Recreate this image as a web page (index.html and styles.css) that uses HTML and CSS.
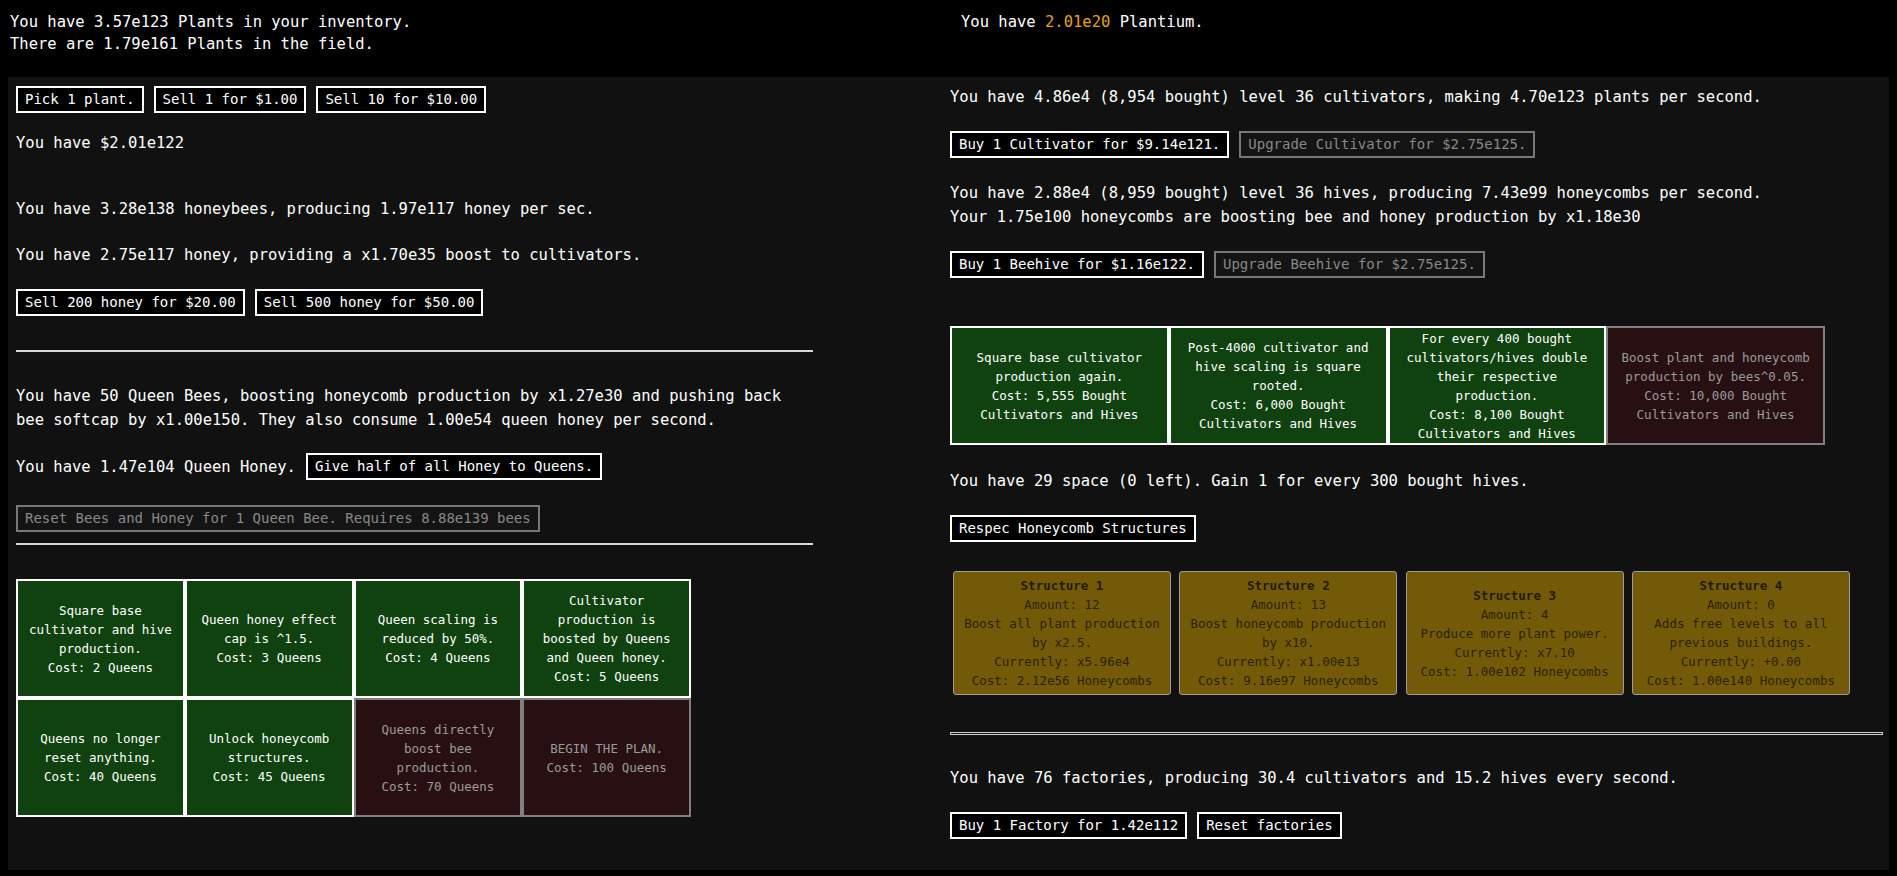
FILE: index.html
```html
<!DOCTYPE html>
<html>
<head>
<meta charset="utf-8">
<title>Plants</title>
<link rel="stylesheet" href="styles.css">
</head>
<body>
<header class="top">
  <div class="top-left">
    <div>You have 3.57e123 Plants in your inventory.</div>
    <div>There are 1.79e161 Plants in the field.</div>
  </div>
  <div class="top-right">You have <span class="plantium">2.01e20</span> Plantium.</div>
</header>
<main class="panel">
  <section class="col col-left">
    <div class="btn-row l1">
      <button class="btn">Pick 1 plant.</button>
      <button class="btn">Sell 1 for $1.00</button>
      <button class="btn">Sell 10 for $10.00</button>
    </div>
    <p class="txt l2">You have $2.01e122</p>
    <p class="txt l3">You have 3.28e138 honeybees, producing 1.97e117 honey per sec.</p>
    <p class="txt l4">You have 2.75e117 honey, providing a x1.70e35 boost to cultivators.</p>
    <div class="btn-row l5">
      <button class="btn">Sell 200 honey for $20.00</button>
      <button class="btn">Sell 500 honey for $50.00</button>
    </div>
    <hr class="rule l6">
    <p class="txt l7">You have 50 Queen Bees, boosting honeycomb production by x1.27e30 and pushing back bee softcap by x1.00e150. They also consume 1.00e54 queen honey per second.</p>
    <div class="btn-row l8">
      <span class="txt">You have 1.47e104 Queen Honey.</span>
      <button class="btn">Give half of all Honey to Queens.</button>
    </div>
    <div class="btn-row l9">
      <button class="btn btn-off">Reset Bees and Honey for 1 Queen Bee. Requires 8.88e139 bees</button>
    </div>
    <hr class="rule l10">
    <div class="ugrid qgrid l11">
      <div class="cell">Square base cultivator and hive production.<br>Cost: 2 Queens</div>
      <div class="cell">Queen honey effect cap is ^1.5.<br>Cost: 3 Queens</div>
      <div class="cell">Queen scaling is reduced by 50%.<br>Cost: 4 Queens</div>
      <div class="cell">Cultivator production is boosted by Queens and Queen honey.<br>Cost: 5 Queens</div>
      <div class="cell">Queens no longer reset anything.<br>Cost: 40 Queens</div>
      <div class="cell">Unlock honeycomb structures.<br>Cost: 45 Queens</div>
      <div class="cell off">Queens directly boost bee production.<br>Cost: 70 Queens</div>
      <div class="cell off">BEGIN THE PLAN.<br>Cost: 100 Queens</div>
    </div>
  </section>
  <section class="col col-right">
    <p class="txt r1">You have 4.86e4 (8,954 bought) level 36 cultivators, making 4.70e123 plants per second.</p>
    <div class="btn-row r2">
      <button class="btn">Buy 1 Cultivator for $9.14e121.</button>
      <button class="btn btn-off">Upgrade Cultivator for $2.75e125.</button>
    </div>
    <p class="txt r3">You have 2.88e4 (8,959 bought) level 36 hives, producing 7.43e99 honeycombs per second.<br>Your 1.75e100 honeycombs are boosting bee and honey production by x1.18e30</p>
    <div class="btn-row r4">
      <button class="btn">Buy 1 Beehive for $1.16e122.</button>
      <button class="btn btn-off">Upgrade Beehive for $2.75e125.</button>
    </div>
    <div class="ugrid hgrid r5">
      <div class="cell">Square base cultivator production again.<br>Cost: 5,555 Bought Cultivators and Hives</div>
      <div class="cell">Post-4000 cultivator and hive scaling is square rooted.<br>Cost: 6,000 Bought Cultivators and Hives</div>
      <div class="cell">For every 400 bought cultivators/hives double their respective production.<br>Cost: 8,100 Bought Cultivators and Hives</div>
      <div class="cell off">Boost plant and honeycomb production by bees^0.05.<br>Cost: 10,000 Bought Cultivators and Hives</div>
    </div>
    <p class="txt r6">You have 29 space (0 left). Gain 1 for every 300 bought hives.</p>
    <div class="btn-row r7">
      <button class="btn">Respec Honeycomb Structures</button>
    </div>
    <div class="structs r8">
      <div class="struct">
        <div class="s-title">Structure 1</div>
        <div>Amount: 12</div>
        <div>Boost all plant production by x2.5.</div>
        <div>Currently: x5.96e4</div>
        <div>Cost: 2.12e56 Honeycombs</div>
      </div>
      <div class="struct">
        <div class="s-title">Structure 2</div>
        <div>Amount: 13</div>
        <div>Boost honeycomb production by x10.</div>
        <div>Currently: x1.00e13</div>
        <div>Cost: 9.16e97 Honeycombs</div>
      </div>
      <div class="struct">
        <div class="s-title">Structure 3</div>
        <div>Amount: 4</div>
        <div>Produce more plant power.</div>
        <div>Currently: x7.10</div>
        <div>Cost: 1.00e102 Honeycombs</div>
      </div>
      <div class="struct">
        <div class="s-title">Structure 4</div>
        <div>Amount: 0</div>
        <div>Adds free levels to all previous buildings.</div>
        <div>Currently: +0.00</div>
        <div>Cost: 1.00e140 Honeycombs</div>
      </div>
    </div>
    <hr class="rule2 r9">
    <p class="txt r10">You have 76 factories, producing 30.4 cultivators and 15.2 hives every second.</p>
    <div class="btn-row r11">
      <button class="btn">Buy 1 Factory for 1.42e112</button>
      <button class="btn">Reset factories</button>
    </div>
  </section>
</main>
</body>
</html>
```

FILE: styles.css
```css
html {
  background: #000;
}
body {
  margin: 8px;
  background: #000;
  color: #fff;
  font-family: "DejaVu Sans Mono", "Liberation Mono", monospace;
  font-size: 15.5px;
  line-height: 24px;
}
.top {
  display: grid;
  grid-template-columns: 951px 1fr;
  height: 69px;
  box-sizing: border-box;
  padding: 3px 0 0 2px;
  line-height: 22px;
}
.plantium {
  color: #e6a020;
}
.panel {
  display: grid;
  grid-template-columns: 797px 933px;
  column-gap: 137px;
  align-items: start;
  background: #111;
  padding: 0 6px 31px 8px;
}
.col {
  display: flex;
  flex-direction: column;
  align-items: flex-start;
}
.txt {
  margin: 0;
}
.btn-row {
  display: flex;
  align-items: center;
  gap: 10px;
}
.btn {
  font-family: inherit;
  font-size: 14px;
  line-height: 19px;
  padding: 2px 7px;
  border: 2px solid #fff;
  background: #000;
  color: #fff;
  margin: 0;
  white-space: nowrap;
}
.btn-off {
  border-color: #777;
  color: #888;
  background: #141414;
}
.rule {
  align-self: stretch;
  height: 0;
  margin: 0;
  border: none;
  border-top: 2px solid #d8d8d8;
}
.rule2 {
  align-self: stretch;
  height: 1px;
  margin: 0;
  border: 1px solid #d0d0d0;
  background: #111;
}
.ugrid {
  display: grid;
  grid-template-columns: repeat(4, 1fr);
}
.qgrid {
  width: 675px;
  grid-auto-rows: 119px;
}
.hgrid {
  width: 875px;
  grid-auto-rows: 119px;
}
.cell {
  box-sizing: border-box;
  border: 2px solid #fff;
  background: #10420f;
  color: #fff;
  font-size: 12.5px;
  line-height: 19px;
  padding: 0 5px;
  display: flex;
  align-items: center;
  justify-content: center;
  text-align: center;
}
.cell.off {
  border-color: #808080;
  background: #281012;
  color: #9a9a9a;
}
.structs {
  display: flex;
  gap: 8.3px;
  margin-left: 3px;
}
.struct {
  box-sizing: border-box;
  width: 218px;
  height: 124px;
  background: #735a08;
  border: 1px solid #9c9c9c;
  border-radius: 3px;
  color: #2c2305;
  font-size: 12.5px;
  line-height: 19px;
  padding: 0 6px;
  display: flex;
  flex-direction: column;
  justify-content: center;
  text-align: center;
}
.s-title {
  font-weight: bold;
  color: #231c03;
}

/* left column vertical rhythm */
.l1 { margin-top: 9px; }
.l2 { margin-top: 18px; }
.l3 { margin-top: 42px; }
.l4 { margin-top: 22px; }
.l5 { margin-top: 22px; }
.l6 { margin-top: 34px; }
.l7 { margin-top: 32px; }
.l8 { margin-top: 21px; }
.l9 { margin-top: 25px; }
.l10 { margin-top: 11px; }
.l11 { margin-top: 34px; }

/* right column vertical rhythm */
.r1 { margin-top: 8px; }
.r2 { margin-top: 22px; }
.r3 { margin-top: 23px; }
.r4 { margin-top: 22px; }
.r5 { margin-top: 48px; }
.r6 { margin-top: 24px; }
.r7 { margin-top: 22px; }
.r8 { margin-top: 29px; }
.r9 { margin-top: 37px; }
.r10 { margin-top: 31px; }
.r11 { margin-top: 22px; }
```
